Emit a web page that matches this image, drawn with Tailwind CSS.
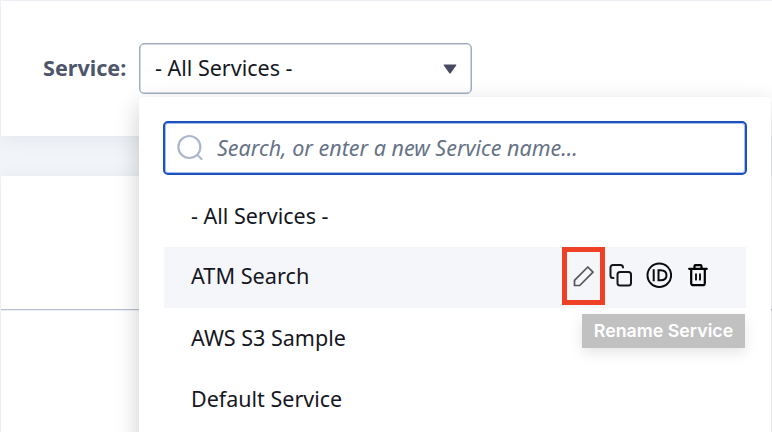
<!DOCTYPE html>
<html lang="en">
<head>
    <meta charset="UTF-8">
    <meta name="viewport" content="width=device-width, initial-scale=1.0">
    <title>Services</title>
    <script src="https://cdn.jsdelivr.net/npm/@tailwindcss/browser@4"></script>
</head>
<body class="h-[432px] overflow-hidden bg-[#f1f4f8] font-['Noto_Sans','Open_Sans',sans-serif] text-[21.5px] text-[#15171f]">
    <div class="relative h-[432px] overflow-hidden pt-px pl-px">
        <!-- Filter bar -->
        <div class="flex h-[135px] items-start bg-white pt-[42px] pl-[42px] shadow-[0_2px_18px_rgba(70,90,120,0.08)]">
            <label class="w-[96px] text-[21.6px] leading-[50px] font-bold whitespace-nowrap text-[#4d566b]">Service:</label>
            <button class="flex h-[51px] w-[333px] items-center justify-between rounded-[5px] border-[1.5px] border-[#a3adc2] bg-white pr-[14px] pl-[15px] shadow-[inset_0_0_0_0.5px_#a3adc2]">
                <span class="whitespace-nowrap">- All Services -</span>
                <svg class="h-[10px] w-[14px]" viewBox="0 0 14 10" fill="#484a63"><path d="M1.2 .5h11.6q1 0 .4 .9L7.8 9q-.8 1-1.6 0L.8 1.4Q.2 .5 1.2 .5z"/></svg>
            </button>
        </div>
        <!-- Content card -->
        <div class="mt-10 h-[300px] bg-white shadow-[0_0_14px_rgba(70,90,120,0.06)]">
            <div class="h-[134px] border-b border-[#b9bfd0] shadow-[0_1px_0_#eceff5]"></div>
        </div>

        <!-- Dropdown -->
        <div class="absolute top-[97px] left-[139px] h-[400px] w-[632px] rounded-[4px] bg-white px-[25px] pt-6 shadow-[0_8px_24px_rgba(0,0,0,0.2)]">
            <div class="-mx-px flex h-[54px] items-center rounded-[5px] border-2 border-[#1d4fc0] pl-3 shadow-[inset_0_0_0_1px_#a9c0ec]">
                <svg class="mb-px h-[27px] w-[27px]" viewBox="0 0 27 27" fill="none" stroke="#adb7cb" stroke-width="2.2" stroke-linecap="round"><circle cx="12.4" cy="13" r="11"/><path d="M20.5 21l4 4"/></svg>
                <span class="ml-[13px] whitespace-nowrap text-[#667286] italic">Search, or enter a new Service name...</span>
            </div>
            <ul class="pt-[11px]">
                <li class="flex h-[61px] items-center pl-[27px]">- All Services -</li>
                <li class="flex h-[61px] items-center justify-between bg-[#f5f6fa] pr-[38px] pl-[27px]">
                    <span class="pb-[2px] text-[21.7px]">ATM Search</span>
                    <span class="relative flex h-full items-start">
                        <span class="flex h-[58px] w-[43px] items-center justify-center border-[5px] border-[#ee4025]">
                            <svg class="mb-px ml-px h-[22px] w-[22px]" viewBox="0 0 22 22" fill="none" stroke="#555559" stroke-width="1.7" stroke-linejoin="round"><path d="M1.5 20.5v-5.2L14.8 2l5.2 5.2L6.7 20.5z"/></svg>
                        </span>
                        <svg class="mt-[16px] ml-[4px] h-[24px] w-[24px]" viewBox="0 0 24 24" fill="none" stroke="#15151b" stroke-width="2" stroke-linecap="round"><path d="M4.500 15H4a2.500 2.500 0 0 1-2.500-2.500V4.500A2.500 2.500 0 0 1 4 2h7.500A2.500 2.500 0 0 1 14 4.500"/><rect x="8.500" y="9" width="13.500" height="13.500" rx="2.500"/></svg>
                        <svg class="mt-[15px] ml-[13px] h-[26px] w-[26px]" viewBox="0 0 26 26" fill="none" stroke="#0c0c10" stroke-width="2"><circle cx="13.300" cy="13.200" r="11.800"/><path d="M7.700 7.200v12M12.500 8.200v10h2c3.800 0 6-1.800 6-5s-2.200-5-6-5z"/></svg>
                        <svg class="mt-[16px] ml-[16px] h-[24px] w-[20px]" viewBox="0 0 20 24" fill="none" stroke="#000" stroke-width="2.200" stroke-linecap="round" stroke-linejoin="round"><path d="M1.200 5.800h17.600M6.500 5.500V3.200q0-1 1-1h5q1 0 1 1v2.300M3.200 6v14.200a2 2 0 0 0 2 2h9.600a2 2 0 0 0 2-2V6"/><path d="M8 11.200v5.500M12 11.200v5.500" stroke-width="1.800"/></svg>
                        <!-- Tooltip -->
                        <span class="absolute top-[67px] left-[20px] flex h-[34px] w-[163px] items-center justify-center bg-[#c1c1c1] font-[Inter,sans-serif] text-[17.8px] font-semibold whitespace-nowrap text-white shadow-[0_5px_14px_rgba(0,0,0,0.1)]">Rename Service</span>
                    </span>
                </li>
                <li class="flex h-[61px] items-center pl-[27px]">AWS S3 Sample</li>
                <li class="flex h-[61px] items-center pl-[27px]">Default Service</li>
            </ul>
        </div>
    </div>
</body>
</html>
